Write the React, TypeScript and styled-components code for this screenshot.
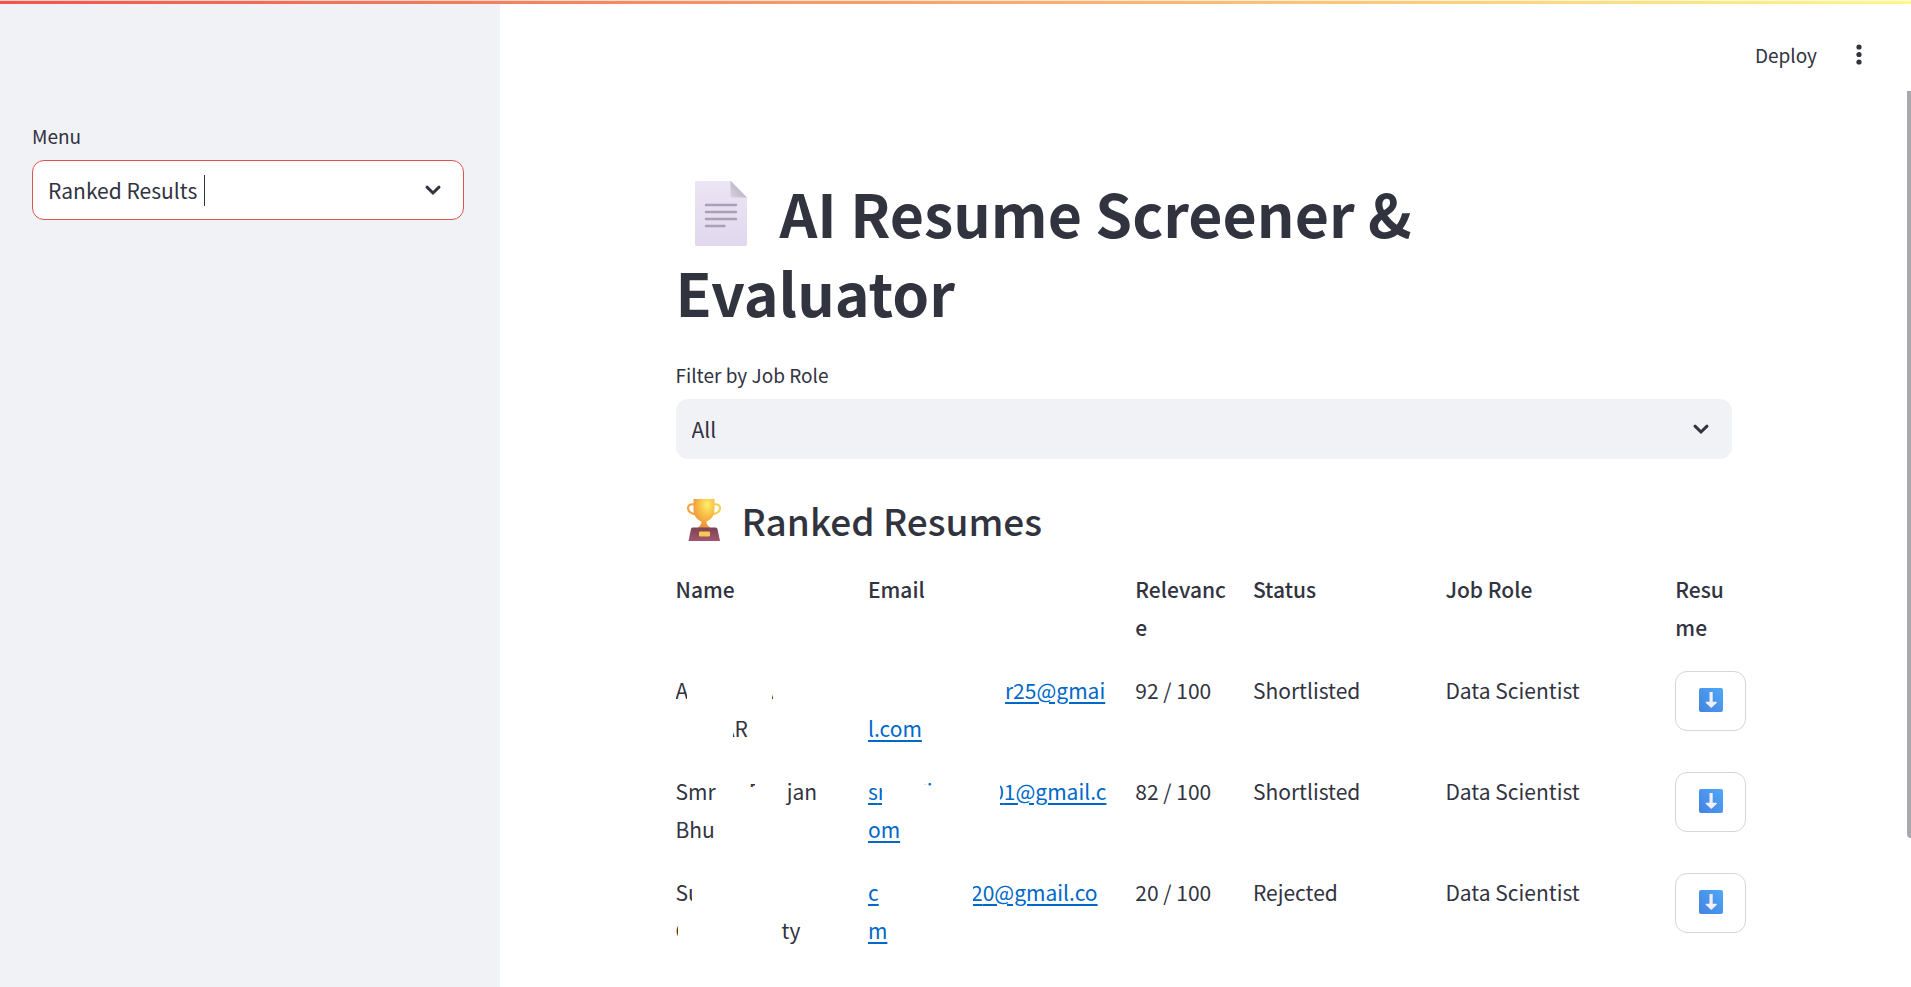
import React from "react";
import styled, { createGlobalStyle } from "styled-components";

const ink = "#31333f";
const panel = "#f0f2f6";

const GlobalStyle = createGlobalStyle`
  *, *::before, *::after { box-sizing: border-box; }
  body {
    margin: 0;
    background: #ffffff;
    color: ${ink};
    font-family: "Noto Sans CJK SC", "Noto Sans", sans-serif;
    font-size: 21px;
    line-height: 38px;
  }
  button, select { font: inherit; color: inherit; }
`;

const Page = styled.div`
  display: flex;
  flex-direction: column;
  min-height: 100vh;
`;

const TopStripe = styled.div`
  height: 4px;
  border-top: 1px solid rgba(255, 255, 255, 0.7);
  background: linear-gradient(90deg, #f0554f, #fff78a) border-box;
`;

const Body = styled.div`
  display: flex;
  flex: 1;
`;

const Sidebar = styled.aside`
  flex: 0 0 500px;
  padding: 116px 36px 32px 32px;
  background: ${panel};
`;

const Main = styled.main`
  flex: 1;
  min-width: 0;
`;

const Header = styled.header`
  display: flex;
  align-items: center;
  justify-content: flex-end;
  gap: 26px;
  height: 101px;
  padding-right: 32px;
`;

const HeaderButton = styled.button`
  display: flex;
  align-items: center;
  justify-content: center;
  min-width: 32px;
  height: 38px;
  padding: 0;
  border: 0;
  background: transparent;
  font-size: 19px;
  cursor: pointer;
`;

const Content = styled.div`
  max-width: 1056px;
  margin: 0 auto;
  padding-top: 68px;
`;

const Title = styled.h1`
  margin: 0;
  font-size: 59px;
  font-weight: 700;
  line-height: 79px;
`;

const Subtitle = styled.h2`
  display: flex;
  align-items: center;
  gap: 20px;
  margin: 32px 0 21px;
  padding-left: 10px;
  font-size: 37px;
  font-weight: 500;
  line-height: 58px;
`;

const TitleIcon = styled.svg`
  width: 54px;
  height: 68px;
  margin: 0 32px 0 18px;
  vertical-align: -10px;
`;

const Label = styled.label`
  display: block;
  padding-bottom: 8px;
  font-size: 19px;
  line-height: 32px;
`;

const FilterBlock = styled.div`
  padding-top: 28px;
`;

const Field = styled.div`
  position: relative;
`;

const Select = styled.select<{ $active?: boolean }>`
  display: block;
  width: 100%;
  height: 60px;
  padding: 0 48px 0 15px;
  border: 1px solid ${(p) => (p.$active ? "#dc5450" : panel)};
  border-radius: 12px;
  outline: none;
  appearance: none;
  background: ${(p) => (p.$active ? "#ffffff" : panel)};
`;

const Chevron = styled.svg`
  position: absolute;
  top: 18px;
  right: 19px;
  width: 24px;
  height: 24px;
  pointer-events: none;
`;

const TextCaret = styled.span`
  position: absolute;
  top: 15px;
  left: 172px;
  width: 1px;
  height: 31px;
  background: ${ink};
`;

const Table = styled.table`
  display: block;
`;

const Rows = styled.tbody`
  display: block;
`;

const Row = styled.tr`
  display: grid;
  grid-template-columns:
    minmax(0, 18fr) minmax(0, 26fr) minmax(0, 10fr)
    minmax(0, 18fr) minmax(0, 22fr) minmax(0, 6fr);
  column-gap: 24px;
  padding-bottom: 25px;
`;

const HeadCell = styled.th`
  padding: 0;
  font-weight: 500;
  text-align: left;
  overflow-wrap: anywhere;
`;

const Cell = styled.td`
  padding: 0;
  white-space: nowrap;
`;

const MailLink = styled.a`
  color: #0068c9;
  text-decoration: underline;
  text-decoration-thickness: 2px;
  text-underline-offset: 3px;
`;

const Gap = styled.span<{ $w: number }>`
  display: inline-block;
  width: ${(p) => p.$w}px;
`;

/* A glyph partly hidden by the redaction around it. */
const Cut = styled.span<{ $w: number; $end?: boolean; $h?: number }>`
  display: inline-flex;
  justify-content: ${(p) => (p.$end ? "flex-end" : "flex-start")};
  width: ${(p) => p.$w}px;
  height: ${(p) => p.$h ?? 38}px;
  overflow: hidden;
  vertical-align: top;
  text-decoration: inherit;
`;

const DownloadButton = styled.button`
  display: flex;
  align-items: center;
  justify-content: center;
  width: 71px;
  height: 60px;
  padding: 0 0 2px;
  border: 1px solid #d6d6d9;
  border-radius: 12px;
  background: #ffffff;
  cursor: pointer;
`;

const ScrollTrack = styled.div`
  display: flex;
  flex: 0 0 4px;
  flex-direction: column;
  padding-top: 87px;
`;

const ScrollThumb = styled.div`
  flex: 5;
  background: #a9a9ae;
  border-radius: 0 0 0 4px;
`;

const ScrollRest = styled.div`
  flex: 1;
`;

function ChevronIcon() {
  return (
    <Chevron viewBox="0 0 24 24" aria-hidden="true">
      <path d="M6 9.2 12 15l6-5.8" fill="none" stroke={ink} strokeWidth="3" strokeLinecap="round" />
    </Chevron>
  );
}

function PageIcon() {
  return (
    <TitleIcon viewBox="0 0 54 68" aria-hidden="true">
      <defs>
        <linearGradient id="sheet" x1="0" y1="0" x2="0" y2="1">
          <stop offset="0" stopColor="#ece5f4" />
          <stop offset="1" stopColor="#e1d8ee" />
        </linearGradient>
        <linearGradient id="fold" x1="1" y1="0" x2="0" y2="1">
          <stop offset="0.4" stopColor="#bdb6c6" />
          <stop offset="1" stopColor="#d9d2e0" />
        </linearGradient>
      </defs>
      <path d="M3 1h34.500L53 17.500V64a2 2 0 0 1-2 2H3a2 2 0 0 1-2-2V3a2 2 0 0 1 2-2Z" fill="url(#sheet)" />
      <path d="M36.500 1 53 17.500H38.500a2 2 0 0 1-2-2Z" fill="url(#fold)" />
      <path d="M12 25h30M12 32h30M12 39h30M12 46h18.500" stroke="#aa9fb4" strokeWidth="2.500" strokeLinecap="round" />
    </TitleIcon>
  );
}

function TrophyIcon() {
  return (
    <svg width="36" height="44" viewBox="0 0 36 44" aria-hidden="true">
      <defs>
        <radialGradient id="cup" cx="0.65" cy="0.2" r="0.8">
          <stop offset="0" stopColor="#fff06a" />
          <stop offset="0.5" stopColor="#f8bc45" />
          <stop offset="1" stopColor="#ea8f3c" />
        </radialGradient>
        <linearGradient id="base" x1="0" y1="0" x2="0" y2="1">
          <stop offset="0" stopColor="#7d4452" />
          <stop offset="1" stopColor="#a15672" />
        </linearGradient>
      </defs>
      <path d="M9 6.500C4 5.500 2 7.500 2 10c0 4 4 6 9 6.500" fill="none" stroke="#f1a640" strokeWidth="2.200" />
      <path d="M27 6.500C32 5.500 34 7.500 34 10c0 4-4 6-9 6.500" fill="none" stroke="#f9cf50" strokeWidth="2.200" />
      <path d="M7.500 1h21v10.500c0 6.500-4 10.500-8 12 0 3 1.500 4.500 4 6.500h-13c2.500-2 4-3.500 4-6.500-4-1.500-8-5.500-8-12Z" fill="url(#cup)" />
      <path d="M6.500 29.500h23a2 2 0 0 1 2 1.500L34 43H2.500L5 31a2 2 0 0 1 1.500-1.500Z" fill="url(#base)" />
      <rect x="13" y="33.500" width="11" height="5" rx="1" fill="#fcc653" />
    </svg>
  );
}

function DownArrowIcon() {
  return (
    <svg width="24" height="24" viewBox="0 0 24 24" aria-hidden="true">
      <defs>
        <linearGradient id="tile" x1="1" y1="0" x2="0" y2="1">
          <stop offset="0" stopColor="#4fa8f8" />
          <stop offset="1" stopColor="#4482e0" />
        </linearGradient>
      </defs>
      <rect width="24" height="24" rx="2" fill="url(#tile)" />
      <path d="M10.500 4h3.200v9.800h3.700a.6.600 0 0 1 .4 1l-5 4.700a.8.800 0 0 1-1.100 0l-5-4.700a.6.600 0 0 1 .4-1h3.400Z" fill="#f3eefc" />
    </svg>
  );
}

type Resume = {
  id: string;
  name: React.ReactNode;
  email: React.ReactNode;
  relevance: number;
  status: string;
  role: string;
};

const resumes: Resume[] = [
  {
    id: "1",
    name: (
      <>
        <Cut $w={11}>A</Cut>
        <Gap $w={85} />
        <Cut $w={1}>A</Cut>
        <br />
        <Gap $w={57} />
        <Cut $w={2} $end>A</Cut>
        R
      </>
    ),
    email: (
      <>
        <Gap $w={137} />
        r25@gmai
        <br />
        l.com
      </>
    ),
    relevance: 92,
    status: "Shortlisted",
    role: "Data Scientist",
  },
  {
    id: "2",
    name: (
      <>
        Smr
        <Gap $w={33} />
        <Cut $w={6} $h={15}>R</Cut>
        <Gap $w={32} />
        jan
        <br />
        Bhu
      </>
    ),
    email: (
      <>
        s
        <Cut $w={4}>m</Cut>
        <Gap $w={40} />
        <Cut $w={5} $h={13}>t</Cut>
        <Cut $w={6} $h={14}>i</Cut>
        <Gap $w={67} />
        <Cut $w={4} $end>0</Cut>
        1@gmail.c
        <br />
        om
      </>
    ),
    relevance: 82,
    status: "Shortlisted",
    role: "Data Scientist",
  },
  {
    id: "3",
    name: (
      <>
        S
        <Cut $w={4}>u</Cut>
        <br />
        <Cut $w={2}>C</Cut>
        <Gap $w={104} />
        ty
      </>
    ),
    email: (
      <>
        c
        <Gap $w={94} />
        <Cut $w={10} $end>2</Cut>
        0@gmail.co
        <br />
        m
      </>
    ),
    relevance: 20,
    status: "Rejected",
    role: "Data Scientist",
  },
];

const columns = ["Name", "Email", "Relevance", "Status", "Job Role", "Resume"];

export default function App() {
  return (
    <Page>
      <GlobalStyle />
      <TopStripe />
      <Body>
        <Sidebar>
          <Label htmlFor="menu">Menu</Label>
          <Field>
            <Select id="menu" $active defaultValue="Ranked Results">
              <option>Ranked Results</option>
            </Select>
            <TextCaret />
            <ChevronIcon />
          </Field>
        </Sidebar>
        <Main>
          <Header>
            <HeaderButton type="button">Deploy</HeaderButton>
            <HeaderButton type="button" aria-label="Main menu">
              <svg width="6" height="21" viewBox="0 0 6 21" fill={ink} aria-hidden="true">
                <circle cx="3" cy="3" r="2.600" />
                <circle cx="3" cy="10.500" r="2.600" />
                <circle cx="3" cy="18" r="2.600" />
              </svg>
            </HeaderButton>
          </Header>
          <Content>
            <Title>
              <PageIcon />
              AI Resume Screener &amp;
              <br />
              Evaluator
            </Title>
            <FilterBlock>
              <Label htmlFor="role">Filter by Job Role</Label>
              <Field>
                <Select id="role" defaultValue="All">
                  <option>All</option>
                </Select>
                <ChevronIcon />
              </Field>
            </FilterBlock>
            <Subtitle>
              <TrophyIcon />
              Ranked Resumes
            </Subtitle>
            <Table>
              <Rows as="thead">
                <Row>
                  {columns.map((c) => (
                    <HeadCell key={c} scope="col">{c}</HeadCell>
                  ))}
                </Row>
              </Rows>
              <Rows>
                {resumes.map((r) => (
                  <Row key={r.id}>
                    <Cell>{r.name}</Cell>
                    <Cell><MailLink href="#">{r.email}</MailLink></Cell>
                    <Cell>{r.relevance} / 100</Cell>
                    <Cell>{r.status}</Cell>
                    <Cell>{r.role}</Cell>
                    <Cell>
                      <DownloadButton type="button" aria-label="Download resume">
                        <DownArrowIcon />
                      </DownloadButton>
                    </Cell>
                  </Row>
                ))}
              </Rows>
            </Table>
          </Content>
        </Main>
        <ScrollTrack aria-hidden="true">
          <ScrollThumb />
          <ScrollRest />
        </ScrollTrack>
      </Body>
    </Page>
  );
}
